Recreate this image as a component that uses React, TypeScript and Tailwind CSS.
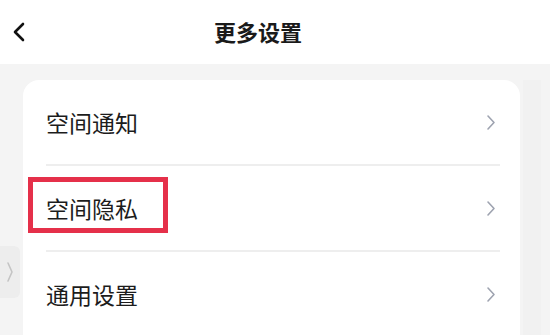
import React from "react";

const items = ["空间通知", "空间隐私", "通用设置"];

const Chevron: React.FC = () => (
  <svg width="10" height="17" viewBox="0 0 10 17" fill="none">
    <path
      d="M2 2l6 6.5-6 6.5"
      stroke="#9ea3b0"
      strokeWidth="1.6"
      strokeLinecap="round"
      strokeLinejoin="round"
    />
  </svg>
);

export default function App() {
  return (
    <div
      className="w-[550px] h-[335px] overflow-hidden bg-[#f4f4f4] relative"
      style={{ fontFamily: '"Noto Sans CJK SC", "Noto Sans", sans-serif' }}
    >
      {/* header */}
      <div className="h-16 bg-white relative flex items-center pl-[214px]">
        <svg
          className="absolute left-[10px] top-[21px]"
          width="18"
          height="22"
          viewBox="0 0 18 22"
          fill="none"
        >
          <path
            d="M13 3L5 11l8 8"
            stroke="#111"
            strokeWidth="2.6"
            strokeLinecap="round"
            strokeLinejoin="round"
          />
        </svg>
        <span className="text-[22px] font-bold text-[#1a1a1a] -mt-[2px]">
          更多设置
        </span>
      </div>

      {/* side handle */}
      <div className="absolute left-0 top-[246px] w-[20px] h-[52px] rounded-r-md bg-[#ededed] flex items-center justify-center">
        <svg width="8" height="22" viewBox="0 0 8 22" fill="none">
          <path
            d="M2 2l4 9-4 9"
            stroke="#c4c4c4"
            strokeWidth="1.6"
            strokeLinecap="round"
            strokeLinejoin="round"
          />
        </svg>
      </div>

      {/* body */}
      <div className="flex pl-[23px] pt-4">
        <div className="w-[497px] bg-white rounded-2xl">
          {items.map((label, i) => (
            <div key={label}>
              {i > 0 && <div className="ml-[23px] mr-[20px] h-[2px] bg-[#eeeeee]" />}
              <div className="relative h-[84px] flex items-center justify-between pl-[23px] pr-[24px]">
                <span className="text-[23px] text-[#1c1c1c] leading-none">{label}</span>
                <Chevron />
                {label === "空间隐私" && (
                  <div className="absolute left-[5px] top-[11px] w-[140px] h-[56px] border-[5px] border-[#e5304a]" />
                )}
              </div>
            </div>
          ))}
        </div>
        <div className="w-[18px] ml-[3px] h-[320px] bg-[#f1f1f1]" />
      </div>
    </div>
  );
}
